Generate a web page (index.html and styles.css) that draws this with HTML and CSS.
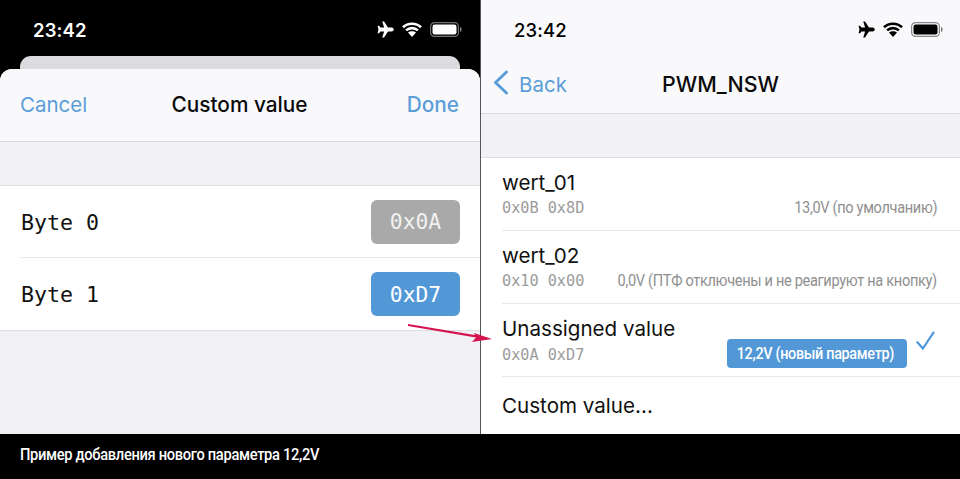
FILE: index.html
```html
<!DOCTYPE html>
<html lang="ru">
<head>
<meta charset="utf-8">
<title>Пример добавления нового параметра</title>
<link rel="stylesheet" href="styles.css">
</head>
<body>
<main class="shot">
  <div class="panels">
    <section class="phone phone-dark">
      <div class="status status-dark">
        <span class="time">23:42</span>
        <span class="status-icons">
          <svg class="ico-plane" viewBox="0 0 20 18"><path fill="currentColor" d="M7.6 0.4h1.9l4.2 6.5h3.6c1.4 0 2.5 1 2.5 2.1s-1.100 2.100-2.500 2.100h-3.600l-4.200 6.500h-1.900l2-6.500h-3.900l-1.500 2h-1.500l0.900-4.100-0.900-4.100h1.500l1.500 2h3.900z"/></svg>
          <svg class="ico-wifi" viewBox="0 0 20 15"><path fill="none" stroke="currentColor" stroke-width="2.600" d="M1 5.200c5-4.700 13-4.700 18 0M4.100 8.400c3.300-3.000 8.500-3.000 11.800 0"/><path fill="currentColor" d="M10 15l-4-4.400c2.300-1.800 5.700-1.800 8 0z"/></svg>
          <svg class="ico-batt" viewBox="0 0 32 15"><rect x="0.600" y="0.600" width="27.800" height="13.800" rx="3.800" fill="none" stroke="currentColor" stroke-opacity=".45" stroke-width="1.200"/><rect x="2.500" y="2.500" width="24" height="10" rx="2.200" fill="currentColor"/><path d="M30 5v5c1-.3 1.700-1.300 1.700-2.500S31 5.300 30 5z" fill="currentColor" fill-opacity=".5"/></svg>
        </span>
      </div>
      <div class="stack-card"></div>
      <div class="sheet">
        <header class="bar sheet-bar">
          <span class="link">Cancel</span>
          <span class="title">Custom value</span>
          <span class="link link-done">Done</span>
        </header>
        <div class="gap-band"></div>
        <div class="list list-bytes">
          <div class="byte-row">
            <span class="byte-label">Byte 0</span>
            <span class="byte-value byte-grey">0x0A</span>
          </div>
          <div class="byte-row">
            <span class="byte-label">Byte 1</span>
            <span class="byte-value byte-blue">0xD7</span>
          </div>
        </div>
        <div class="fill"></div>
      </div>
    </section>
    <section class="phone phone-light">
      <div class="status status-light">
        <span class="time">23:42</span>
        <span class="status-icons">
          <svg class="ico-plane" viewBox="0 0 20 18"><path fill="currentColor" d="M7.6 0.4h1.900l4.200 6.500h3.600c1.400 0 2.500 1 2.500 2.100s-1.100 2.100-2.500 2.100h-3.600l-4.200 6.500h-1.900l2-6.500h-3.900l-1.500 2h-1.500l0.900-4.100-0.900-4.100h1.500l1.500 2h3.900z"/></svg>
          <svg class="ico-wifi" viewBox="0 0 20 15"><path fill="none" stroke="currentColor" stroke-width="2.600" d="M1 5.200c5-4.700 13-4.700 18 0M4.100 8.400c3.300-3 8.500-3 11.800 0"/><path fill="currentColor" d="M10 15l-4-4.400c2.300-1.800 5.700-1.800 8 0z"/></svg>
          <svg class="ico-batt" viewBox="0 0 32 15"><rect x="0.600" y="0.600" width="27.800" height="13.800" rx="3.800" fill="none" stroke="currentColor" stroke-opacity=".45" stroke-width="1.200"/><rect x="2.500" y="2.500" width="24" height="10" rx="2.200" fill="currentColor"/><path d="M30 5v5c1-.3 1.700-1.300 1.700-2.500S31 5.300 30 5z" fill="currentColor" fill-opacity=".5"/></svg>
        </span>
      </div>
      <header class="bar nav-bar">
        <span class="back">
          <svg class="ico-chevron" viewBox="0 0 16 25"><path fill="none" stroke="currentColor" stroke-width="3" stroke-linecap="round" stroke-linejoin="round" d="M13.500 2L2.500 12.500 13.500 23"/></svg>
          <span class="link">Back</span>
        </span>
        <span class="title">PWM_NSW</span>
        <span></span>
      </header>
      <div class="gap-band"></div>
      <div class="list list-values">
        <div class="value-row">
          <div class="value-name">wert_01</div>
          <div class="value-sub"><span class="hex">0x0B 0x8D</span><span class="note">13,0V (по умолчанию)</span></div>
        </div>
        <div class="value-row">
          <div class="value-name">wert_02</div>
          <div class="value-sub"><span class="hex">0x10 0x00</span><span class="note">0,0V (ПТФ отключены и не реагируют на кнопку)</span></div>
        </div>
        <div class="value-row value-row-selected">
          <div class="value-text">
            <div class="value-name">Unassigned value</div>
            <div class="hex hex-selected">0x0A 0xD7</div>
          </div>
          <span class="tag"><span class="tag-text">12,2V (новый параметр)</span></span>
          <svg class="ico-check" viewBox="0 0 19 19"><path fill="none" stroke="currentColor" stroke-width="2.200" d="M0.800 10.500L6.800 17.500 18 0.800"/></svg>
        </div>
        <div class="value-row value-row-last">
          <div class="value-name">Custom value...</div>
        </div>
      </div>
    </section>
    <svg class="arrow" viewBox="0 0 88 22"><path d="M1 2L69 13.300" stroke="#d5134f" stroke-width="2.200" fill="none"/><path d="M85 16L67 10 69 14.500 65 19z" fill="#d5134f"/></svg>
  </div>
  <footer class="caption"><span class="caption-text">Пример добавления нового параметра 12,2V</span></footer>
</main>
</body>
</html>
```
FILE: styles.css
```css
* { box-sizing: border-box; }
html, body { margin: 0; padding: 0; }
body { width: 960px; height: 479px; overflow: hidden; background: #000; font-family: Inter, "Liberation Sans", sans-serif; }
.shot { display: flex; flex-direction: column; width: 960px; height: 479px; }
.panels { position: relative; display: grid; grid-template-columns: 480px 480px; height: 434px; }
.phone { display: flex; flex-direction: column; height: 434px; overflow: hidden; }
.phone-dark { background: #000; }
.phone-light { background: #f9f9fb; border-left: 1px solid #55565a; }
.status { display: flex; justify-content: space-between; align-items: center; flex: none; height: 56px; padding-top: 3px; }
.status-dark { color: #fff; padding-left: 33px; padding-right: 18px; }
.status-light { color: #000; padding-left: 33px; padding-right: 17px; }
.time { font-size: 18.500px; font-weight: 600; letter-spacing: .1px; }
.status-light .time { font-weight: 500; }
.status-icons { display: flex; align-items: center; gap: 8px; }
.ico-plane { width: 19px; height: 17px; }
.ico-wifi { width: 20px; height: 15px; }
.ico-batt { width: 32px; height: 15px; }
.stack-card { flex: none; height: 13px; margin: 0 20px; background: #dcdcde; border-radius: 11px 11px 0 0; }
.sheet { flex: 1; display: flex; flex-direction: column; background: #f0f0f5; border-radius: 12px 12px 0 0; overflow: hidden; }
.bar { flex: none; display: grid; grid-template-columns: 1fr auto 1fr; align-items: center; background: #f9f9fb; border-bottom: 1px solid #d8d8dc; }
.sheet-bar { height: 73px; padding: 0 21px 1px 20px; }
.link { color: #5b9dd9; font-size: 20.500px; }
.link-done { justify-self: end; font-size: 20.800px; font-weight: 500; }
.title { color: #0a0a0a; font-size: 20.800px; font-weight: 500; }
.nav-bar { height: 58px; padding: 0 12px 1px; }
.nav-bar .title { font-size: 21.400px; }
.back { display: flex; align-items: center; gap: 10px; color: #5b9dd9; margin-top: -3px; }
.back .link { margin-top: 3px; }
.ico-chevron { width: 16px; height: 25px; }
.gap-band { flex: none; height: 44px; background: #f1f1f6; border-bottom: 1px solid #dedee2; }
.list { flex: none; background: #fff; }
.list-bytes { padding-left: 20px; }
.byte-row { display: flex; justify-content: space-between; align-items: center; height: 72px; padding: 0 20px 0 1px; border-bottom: 1px solid #e9e9ec; }
.byte-row:last-child { border-bottom-color: #dedee2; height: 73px; margin-left: -20px; padding-left: 21px; }
.byte-label { font-family: "DejaVu Sans Mono", monospace; font-size: 21.600px; color: #111; padding-top: 1px; }
.byte-value { display: flex; align-items: center; justify-content: center; width: 89px; height: 44px; border-radius: 6px; color: #fff; font-family: "DejaVu Sans Mono", monospace; font-size: 21.300px; }
.byte-grey { background: #a9a9a9; color: #f1f1f1; }
.byte-blue { background: #5298d7; }
.fill { flex: 1; background: #f0f0f5; }
.list-values { flex: 1; padding-left: 21px; border-bottom: 1px solid #d8d8dc; }
.value-row { position: relative; height: 73px; padding: 12px 23px 0 0; border-bottom: 1px solid #e9e9ec; }
.value-row-last { height: 57px; padding-top: 16px; border-bottom: 0; }
.value-name { color: #111; font-size: 20.600px; line-height: 26px; }
.value-sub { display: flex; justify-content: space-between; align-items: center; margin-top: 1px; }
.hex { color: #9b9b9b; font-family: "DejaVu Sans Mono", monospace; font-size: 15.200px; line-height: 22px; }
.hex-selected { margin-top: 2px; }
.note { display: inline-block; margin-bottom: 2px; color: #8f8f8f; font-family: Roboto, sans-serif; font-size: 16px; letter-spacing: -.35px; transform: scaleX(.91); transform-origin: right center; }
.value-row-selected { display: flex; align-items: flex-start; }
.value-text { flex: 1; }
.tag { flex: none; display: flex; align-items: center; justify-content: center; width: 180px; height: 29px; margin-top: 23px; margin-right: 9px; padding-right: 4px; border-radius: 4px; background: #5298d7; color: #fff; font-family: Roboto, sans-serif; font-size: 16px; font-weight: 500; letter-spacing: -.35px; white-space: nowrap; }
.tag-text { display: inline-block; transform: scaleX(.9); }
.ico-check { flex: none; width: 19px; height: 19px; margin-top: 15px; margin-right: 2px; color: #4f98db; }
.arrow { position: absolute; left: 407px; top: 323px; width: 88px; height: 22px; }
.caption { flex: 1; display: flex; align-items: center; padding: 0 0 4px 20px; background: #000; color: #fff; font-family: Roboto, sans-serif; font-size: 16px; font-weight: 500; letter-spacing: -.35px; }
.caption-text { display: inline-block; transform: scaleX(.917); transform-origin: left center; }
```
